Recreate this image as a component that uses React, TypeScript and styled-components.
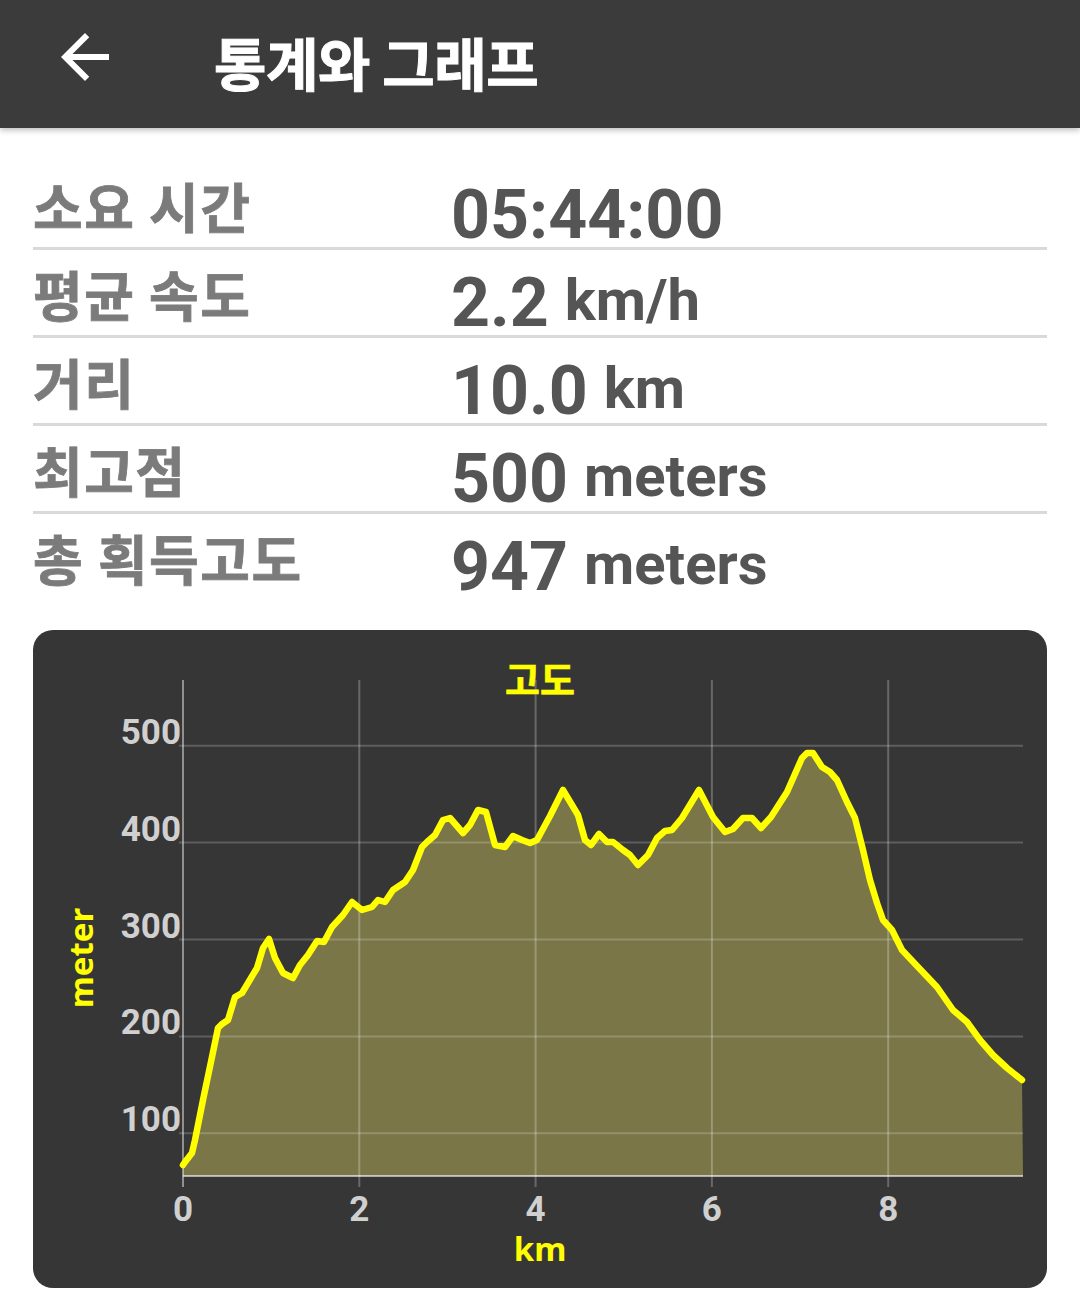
import React from 'react'
import styled, { createGlobalStyle } from 'styled-components'

const KR = "'Noto Sans CJK KR', 'Noto Sans', sans-serif"

const GlobalStyle = createGlobalStyle`
  html, body {
    margin: 0;
    padding: 0;
    background: #ffffff;
  }
  body {
    font-family: Roboto, 'Noto Sans CJK KR', sans-serif;
  }
`

const Page = styled.div`
  width: 1080px;
  min-height: 1316px;
  background: #fff;
`

const TopBar = styled.header`
  position: relative;
  z-index: 1;
  height: 128px;
  box-sizing: border-box;
  padding-bottom: 6px;
  display: flex;
  align-items: center;
  background: #3b3b3b;
  box-shadow: 0 2px 6px rgba(0, 0, 0, 0.28);
`

const BackButton = styled.button`
  display: flex;
  width: 72px;
  height: 72px;
  margin: 0 0 8px 49px;
  padding: 0;
  border: 0;
  background: none;
  color: #fff;

  svg {
    display: block;
    width: 72px;
    height: 72px;
  }
`

const Title = styled.h1`
  margin: 0 0 0 93px;
  font-family: ${KR};
  font-size: 57px;
  font-weight: 700;
  line-height: 1;
  letter-spacing: -0.5px;
  color: #fff;
  -webkit-text-stroke: 1px #fff;
`

const StatList = styled.div`
  padding: 34px 33px 0;
`

const StatRow = styled.div<{ $last?: boolean }>`
  display: flex;
  align-items: flex-start;
  height: 88px;
  box-sizing: border-box;
  padding-top: 18px;
  border-bottom: ${p => (p.$last ? 'none' : '3px solid #d9d9d9')};
`

const Label = styled.div`
  width: 418px;
  margin-top: -1px;
  font-family: ${KR};
  font-size: 54px;
  font-weight: 700;
  line-height: 1;
  letter-spacing: 1.5px;
  color: #7b7b7b;
  -webkit-text-stroke: 0.8px #7b7b7b;
`

const Value = styled.div`
  display: flex;
  align-items: flex-start;
  margin-top: 1px;
  font-family: Roboto, 'Liberation Sans', sans-serif;
  font-weight: 700;
  line-height: 1;
  color: #555555;
`

const Num = styled.span`
  font-size: 68px;
`

const Unit = styled.span`
  margin: 2px 0 0 16px;
  font-size: 58px;
`

const ChartCard = styled.section`
  margin: 28px 33px 0;
  height: 658px;
  border-radius: 20px;
  background: #363636;
  overflow: hidden;

  svg {
    display: block;
  }
`

const ChartTitle = styled.text`
  font-family: ${KR};
  font-size: 38px;
  font-weight: 700;
  fill: #ffff00;
  stroke: #ffff00;
  stroke-width: 0.6px;
`

const AxisTitle = styled.text`
  font-family: 'Noto Sans', Roboto, sans-serif;
  font-size: 33px;
  font-weight: 700;
  fill: #ffff00;
`

const TickLabel = styled.text`
  font-family: Roboto, 'Noto Sans', sans-serif;
  font-size: 35px;
  font-weight: 700;
  fill: #d0d0d0;
`

// chart geometry (card coords)
const X0 = 150
const X1 = 990
const TOP = 50
const BASE = 546
const PX_PER_KM = 88.15
const yOf = (m: number) => 503.3 - (m - 100) * 0.969

// elevation profile traced in screen px, shifted into card coords below
const TRACE: [number, number][] = [
  [183, 1165], [185, 1162], [192, 1153], [195, 1140], [203, 1100], [212, 1057], [218, 1028],
  [222, 1024], [228, 1020], [235, 997], [242, 993], [248, 983], [257, 968], [263, 948],
  [269, 939], [275, 958], [283, 973], [293, 978], [300, 965], [308, 955], [317, 941],
  [324, 942], [332, 927], [343, 915], [352, 902], [362, 910], [372, 907], [378, 900],
  [385, 902], [393, 890], [405, 882], [413, 870], [422, 847], [427, 842], [435, 835],
  [443, 820], [450, 818], [463, 833], [470, 825], [478, 810], [486, 812], [495, 845],
  [505, 847], [513, 836], [522, 840], [530, 843], [537, 840], [550, 816], [563, 790],
  [578, 815], [585, 840], [591, 845], [599, 834], [607, 842], [613, 842], [623, 850],
  [630, 855], [638, 865], [648, 855], [657, 838], [665, 831], [672, 830], [682, 818],
  [699, 790], [713, 817], [725, 832], [733, 829], [743, 818], [752, 818], [761, 828],
  [771, 817], [787, 792], [802, 758], [807, 753], [813, 753], [822, 767], [830, 772],
  [837, 780], [847, 802], [855, 818], [863, 850], [870, 880], [877, 903], [883, 920],
  [892, 930], [902, 950], [918, 967], [937, 987], [953, 1010], [967, 1022], [980, 1040],
  [993, 1055], [1007, 1068], [1022, 1080],
]

const profile = TRACE.map(([x, y]) => [x - 33, y - 630])
const linePath = 'M' + profile.map(p => p.join(',')).join(' L')
const areaPath = `${linePath} L${X1},${BASE} L${X0},${BASE} Z`

const Y_TICKS = [100, 200, 300, 400, 500]
const X_TICKS = [0, 2, 4, 6, 8]

const ElevationChart = () => (
  <svg width="1014" height="658" viewBox="0 0 1014 658">
    <path d={areaPath} fill="#7a7648" />

    {Y_TICKS.map(m => (
      <line key={m} x1={X0 - 4} x2={X1} y1={yOf(m)} y2={yOf(m)} stroke="rgba(255,255,255,0.2)" strokeWidth="2" />
    ))}
    {X_TICKS.slice(1).map(k => (
      <line key={k} x1={X0 + k * PX_PER_KM} x2={X0 + k * PX_PER_KM} y1={TOP} y2={BASE + 11} stroke="rgba(255,255,255,0.25)" strokeWidth="2" />
    ))}
    <line x1={X0} x2={X0} y1={TOP} y2={BASE + 11} stroke="rgba(255,255,255,0.45)" strokeWidth="2" />
    <line x1={X0} x2={X1} y1={BASE} y2={BASE} stroke="rgba(255,255,255,0.6)" strokeWidth="2" />

    <path d={linePath} fill="none" stroke="#ffff00" strokeWidth="6.5" strokeLinejoin="round" strokeLinecap="round" />

    {Y_TICKS.map(m => (
      <TickLabel key={m} x={X0 - 2} y={yOf(m) - 2} textAnchor="end">
        {m}
      </TickLabel>
    ))}
    {X_TICKS.map(k => (
      <TickLabel key={k} x={X0 + k * PX_PER_KM} y={591} textAnchor="middle">
        {k}
      </TickLabel>
    ))}

    <ChartTitle x={507} y={64} textAnchor="middle">
      고도
    </ChartTitle>
    <AxisTitle transform="translate(60,328) rotate(-90)" textAnchor="middle">
      meter
    </AxisTitle>
    <AxisTitle x={507} y={631} textAnchor="middle">
      km
    </AxisTitle>
  </svg>
)

const STATS = [
  { label: '소요 시간', num: '05:44:00', unit: '' },
  { label: '평균 속도', num: '2.2', unit: 'km/h' },
  { label: '거리', num: '10.0', unit: 'km' },
  { label: '최고점', num: '500', unit: 'meters' },
  { label: '총 획득고도', num: '947', unit: 'meters' },
]

const App = () => (
  <Page>
    <GlobalStyle />
    <TopBar>
      <BackButton aria-label="back">
        <svg viewBox="0 0 24 24" fill="currentColor">
          <path d="M20 11H7.83l5.59-5.59L12 4l-8 8 8 8 1.41-1.41L7.83 13H20v-2z" />
        </svg>
      </BackButton>
      <Title>통계와 그래프</Title>
    </TopBar>

    <StatList>
      {STATS.map((s, i) => (
        <StatRow key={s.label} $last={i === STATS.length - 1}>
          <Label>{s.label}</Label>
          <Value>
            <Num>{s.num}</Num>
            {s.unit && <Unit>{s.unit}</Unit>}
          </Value>
        </StatRow>
      ))}
    </StatList>

    <ChartCard>
      <ElevationChart />
    </ChartCard>
  </Page>
)

export default App
